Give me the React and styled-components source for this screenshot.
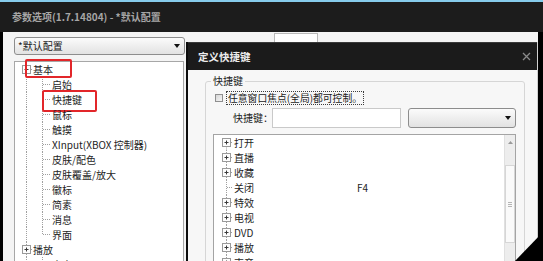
import React from 'react';
import styled, { createGlobalStyle } from 'styled-components';

const FONT = `"Noto Sans CJK SC", "Noto Sans", "DejaVu Sans", sans-serif`;

const GlobalStyle = createGlobalStyle`
  html, body { margin: 0; padding: 0; background: #000; }
  body { font-family: ${FONT}; }
`;

const Screen = styled.div`
  position: relative;
  width: 543px;
  height: 261px;
  overflow: hidden;
  background: #000;
  display: flex;
  flex-direction: column;
  font-family: ${FONT};
`;

const AccentLine = styled.div`
  flex: none;
  height: 2px;
  background: #86cbeb;
`;

const MainTitleBar = styled.div`
  flex: none;
  height: 30px;
  background: #1c1c1c;
  display: flex;
  align-items: center;
  padding-left: 12px;
  color: #a6a6a6;
  font-size: 10px;
  font-weight: 700;
  line-height: 12px;
`;

const MainBody = styled.div`
  flex: 1;
  min-height: 0;
  width: 535px;
  margin-left: 3px;
  background: #f4f4f4;
  display: flex;
  overflow: hidden;
`;

const LeftPanel = styled.div`
  flex: none;
  width: 183px;
  box-sizing: border-box;
  padding: 5px 0 0 11px;
  display: flex;
  flex-direction: column;
  gap: 6px;
`;

const Select = styled.div`
  flex: none;
  width: ${(p) => p.$w}px;
  height: ${(p) => p.$h || 18}px;
  box-sizing: border-box;
  margin-left: ${(p) => p.$ml || 0}px;
  border: 1px solid #8d8d8d;
  border-radius: 3px;
  background: linear-gradient(#fbfbfb, #e2e2e2);
  display: flex;
  align-items: center;
  justify-content: space-between;
  padding: 0 4px 0 3px;
  font-size: 10px;
  line-height: 12px;
  color: #1a1a1a;
`;

const ArrowSvg = styled.svg`
  flex: none;
  display: block;
`;

const DownArrow = () => (
  <ArrowSvg width="6" height="4" viewBox="0 0 6 4">
    <polygon points="0,0 6,0 3,4" fill="#111" />
  </ArrowSvg>
);

const TreeBox = styled.div`
  flex: none;
  width: 170px;
  height: 230px;
  box-sizing: border-box;
  border: 1px solid #a7a7a7;
  background: #fff;
  padding-top: 0;
`;

const TreeRow = styled.div`
  height: 15px;
  display: flex;
  align-items: center;
  white-space: nowrap;
  font-size: 10px;
  line-height: 15px;
  color: #1e1e1e;
`;

const GuideSvg = styled.svg`
  flex: none;
  display: block;
`;

const NodeLabel = styled.span`
  position: relative;
  display: inline-block;
  line-height: 15px;
  ${(p) =>
    p.$hl
      ? `&::after {
    content: '';
    position: absolute;
    left: ${p.$hl.l}px;
    right: ${p.$hl.r}px;
    top: ${p.$hl.t}px;
    bottom: ${p.$hl.b}px;
    border: 2px solid #e2262a;
    border-radius: 2px;
  }`
      : ''}
`;

const NameCell = styled.span`
  flex: none;
  width: ${(p) => p.$w}px;
`;

const KeyCell = styled.span`
  flex: none;
`;

const DOT = '#a0a0a0';

function TreeGuides({ width, lines = [], tick, box }) {
  return (
    <GuideSvg width={width} height={15} viewBox={`0 0 ${width} 15`}>
      {lines.map(([x, y1, y2], i) => (
        <line key={i} x1={x + 0.5} x2={x + 0.5} y1={y1} y2={y2} stroke={DOT} strokeDasharray="1 1" />
      ))}
      {tick && (
        <line x1={tick[0]} x2={tick[1]} y1={7.5} y2={7.5} stroke={DOT} strokeDasharray="1 1" />
      )}
      {box && (
        <g>
          <rect x={box.x - 3.5} y={3.5} width={8} height={8} fill="#fdfdfd" stroke="#9a9a9a" />
          <line x1={box.x - 1.5} x2={box.x + 2.5} y1={7.5} y2={7.5} stroke="#3a3a3a" />
          {box.type === 'plus' && (
            <line x1={box.x + 0.5} x2={box.x + 0.5} y1={5.5} y2={9.5} stroke="#3a3a3a" />
          )}
        </g>
      )}
    </GuideSvg>
  );
}

const leftTree = [
  { label: '基本', level: 0, box: 'minus', first: true, hl: { l: -8, r: -19, t: -3, b: -1 } },
  { label: '启始', level: 1 },
  { label: '快捷键', level: 1, hl: { l: -10, r: -15, t: -2, b: -5 } },
  { label: '鼠标', level: 1 },
  { label: '触摸', level: 1 },
  { label: 'XInput(XBOX 控制器)', level: 1 },
  { label: '皮肤/配色', level: 1 },
  { label: '皮肤覆盖/放大', level: 1 },
  { label: '徽标', level: 1 },
  { label: '简素', level: 1 },
  { label: '消息', level: 1 },
  { label: '界面', level: 1, last: true },
  { label: '播放', level: 0, box: 'plus' },
  { label: '声音', level: 1 },
];

function LeftTreeRow({ item }) {
  if (item.level === 0) {
    return (
      <TreeRow>
        <TreeGuides
          width={18}
          lines={[[11, item.first ? 7.5 : 0, 15]]}
          tick={[16, 18]}
          box={{ x: 11, type: item.box }}
        />
        <NodeLabel $hl={item.hl}>{item.label}</NodeLabel>
      </TreeRow>
    );
  }
  return (
    <TreeRow>
      <TreeGuides
        width={37}
        lines={[
          [11, 0, 15],
          [27, 0, item.last ? 7.5 : 15],
        ]}
        tick={[28, 35]}
      />
      <NodeLabel $hl={item.hl}>{item.label}</NodeLabel>
    </TreeRow>
  );
}

const RightArea = styled.div`
  flex: 1;
  min-width: 0;
  display: flex;
  flex-direction: column;
`;

const BehindStrip = styled.div`
  flex: none;
  height: 10px;
  display: flex;
  align-items: flex-end;
`;

const BehindField = styled.div`
  width: 44px;
  height: 9px;
  margin-left: 88px;
  box-sizing: border-box;
  background: #fff;
  border: 1px solid #b9b9b9;
  border-bottom: none;
`;

const Dialog = styled.div`
  flex: 1;
  min-height: 0;
  display: flex;
  flex-direction: column;
  border-left: 2px solid #0d0d0d;
  border-right: 1px solid #d0d0d0;
  background: #f7f7f7;
  overflow: hidden;
`;

const DialogTitleBar = styled.div`
  flex: none;
  height: 28px;
  background: #1b1b1b;
  border-top: 1px solid #3a3a3a;
  box-sizing: border-box;
  display: flex;
  align-items: center;
  justify-content: space-between;
  padding: 0 6px 0 10px;
  color: #ececec;
  font-size: 10.5px;
  font-weight: 700;
  line-height: 12px;
`;

const CloseSvg = styled.svg`
  display: block;
`;

const DialogBody = styled.div`
  flex: 1;
  min-height: 0;
  padding: 5px 12px 0 17px;
`;

const GroupBox = styled.fieldset`
  margin: 0;
  min-width: 0;
  padding: 4px 8px 0 7px;
  border: 1px solid #d6d6d6;
  border-radius: 3px;
`;

const GroupLegend = styled.legend`
  padding: 0 2px;
  margin-left: -2px;
  font-size: 10px;
  line-height: 12px;
  color: #222;
`;

const CheckRow = styled.div`
  height: 14px;
  margin-left: 2px;
  display: flex;
  align-items: center;
`;

const CheckBox = styled.span`
  flex: none;
  width: 8px;
  height: 8px;
  margin-right: 3px;
  box-sizing: border-box;
  border: 1px solid #8f8f8f;
  background: linear-gradient(135deg, #d6d6d6, #f6f6f6);
`;

const FocusLabel = styled.span`
  border: 1px dotted #3c3c3c;
  padding: 0 1px;
  font-size: 9.8px;
  line-height: 12px;
  color: #1a1a1a;
  white-space: nowrap;
`;

const FieldRow = styled.div`
  height: 20px;
  margin-top: 3px;
  padding-left: 20px;
  display: flex;
  align-items: center;
`;

const FieldLabel = styled.span`
  flex: none;
  width: 39px;
  font-size: 10px;
  line-height: 12px;
  color: #1e1e1e;
  white-space: nowrap;
`;

const TextInput = styled.div`
  flex: none;
  width: 129px;
  height: 20px;
  box-sizing: border-box;
  border: 1px solid #c9c9c9;
  background: #fff;
`;

const ListBox = styled.div`
  margin-top: 6px;
  height: 140px;
  box-sizing: border-box;
  border: 1px solid #a4a4a4;
  background: #fff;
  display: flex;
`;

const ListRows = styled.div`
  flex: 1;
  min-width: 0;
`;

const ScrollBar = styled.div`
  flex: none;
  width: 11px;
  box-sizing: border-box;
  border-left: 1px solid #e0e0e0;
  background: #ededed;
  display: flex;
  flex-direction: column;
`;

const ScrollBtn = styled.div`
  flex: none;
  height: 14px;
  display: flex;
  align-items: center;
  justify-content: center;
`;

const ScrollGap = styled.div`
  flex: none;
  height: 16px;
`;

const ScrollThumb = styled.div`
  flex: none;
  height: 78px;
  box-sizing: border-box;
  border: 1px solid #d6d6d6;
  background: #fafafa;
  display: flex;
  align-items: center;
  justify-content: center;
`;

const Grip = styled.span`
  width: 4px;
  height: 5px;
  border-top: 1px solid #b5b5b5;
  border-bottom: 1px solid #b5b5b5;
  box-sizing: border-box;
  position: relative;
  &::after {
    content: '';
    position: absolute;
    left: 0;
    right: 0;
    top: 1px;
    border-top: 1px solid #b5b5b5;
  }
`;

const CornerShade = styled.svg`
  position: absolute;
  right: 0;
  bottom: 0;
  display: block;
`;

const hotkeys = [
  { label: '打开', box: true, first: true },
  { label: '直播', box: true },
  { label: '收藏', box: true },
  { label: '关闭', key: 'F4' },
  { label: '特效', box: true },
  { label: '电视', box: true },
  { label: 'DVD', box: true },
  { label: '播放', box: true },
  { label: '声音', box: true },
];

function HotkeyRow({ item }) {
  return (
    <TreeRow>
      <TreeGuides
        width={20}
        lines={[[12, item.first ? 7.5 : 0, 15]]}
        tick={item.box ? [17, 19] : [13, 19]}
        box={item.box ? { x: 12, type: 'plus' } : null}
      />
      <NameCell $w={123}>{item.label}</NameCell>
      {item.key && <KeyCell>{item.key}</KeyCell>}
    </TreeRow>
  );
}

export default function App() {
  return (
    <>
      <GlobalStyle />
      <Screen>
        <AccentLine />
        <MainTitleBar>参数选项(1.7.14804) - *默认配置</MainTitleBar>
        <MainBody>
          <LeftPanel>
            <Select $w={171}>
              <span>*默认配置</span>
              <DownArrow />
            </Select>
            <TreeBox>
              {leftTree.map((item, i) => (
                <LeftTreeRow key={i} item={item} />
              ))}
            </TreeBox>
          </LeftPanel>
          <RightArea>
            <BehindStrip>
              <BehindField />
            </BehindStrip>
            <Dialog>
              <DialogTitleBar>
                <span>定义快捷键</span>
                <CloseSvg width="9" height="9" viewBox="0 0 9 9">
                  <path d="M1 1 L8 8 M8 1 L1 8" stroke="#8a8a8a" strokeWidth="1.3" />
                </CloseSvg>
              </DialogTitleBar>
              <DialogBody>
                <GroupBox>
                  <GroupLegend>快捷键</GroupLegend>
                  <CheckRow>
                    <CheckBox />
                    <FocusLabel>任意窗口焦点(全局)都可控制。</FocusLabel>
                  </CheckRow>
                  <FieldRow>
                    <FieldLabel>快捷键：</FieldLabel>
                    <TextInput />
                    <Select $w={108} $h={20} $ml={7}>
                      <span />
                      <DownArrow />
                    </Select>
                  </FieldRow>
                  <ListBox>
                    <ListRows>
                      {hotkeys.map((item, i) => (
                        <HotkeyRow key={i} item={item} />
                      ))}
                    </ListRows>
                    <ScrollBar>
                      <ScrollBtn>
                        <ArrowSvg width="5" height="3" viewBox="0 0 5 3">
                          <polygon points="0,3 5,3 2.5,0" fill="#9a9a9a" />
                        </ArrowSvg>
                      </ScrollBtn>
                      <ScrollGap />
                      <ScrollThumb>
                        <Grip />
                      </ScrollThumb>
                    </ScrollBar>
                  </ListBox>
                </GroupBox>
              </DialogBody>
            </Dialog>
          </RightArea>
        </MainBody>
        <CornerShade width="28" height="29" viewBox="0 0 28 29">
          <polygon points="0,29 28,0 28,29" fill="#000" />
        </CornerShade>
      </Screen>
    </>
  );
}
